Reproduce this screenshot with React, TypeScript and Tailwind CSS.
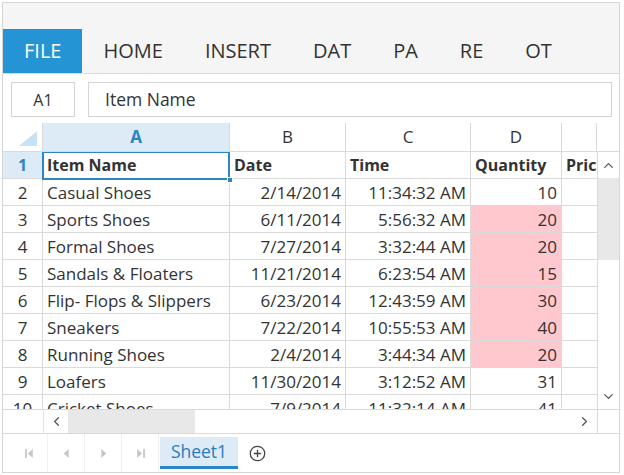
import { ChevronDown, ChevronLeft, ChevronRight, ChevronUp } from 'lucide-react';

type Row = {
  name: string;
  date: string;
  time: string;
  qty: string;
  hot?: boolean;
};

const ROWS: Row[] = [
  { name: 'Casual Shoes', date: '2/14/2014', time: '11:34:32 AM', qty: '10' },
  { name: 'Sports Shoes', date: '6/11/2014', time: '5:56:32 AM', qty: '20', hot: true },
  { name: 'Formal Shoes', date: '7/27/2014', time: '3:32:44 AM', qty: '20', hot: true },
  { name: 'Sandals & Floaters', date: '11/21/2014', time: '6:23:54 AM', qty: '15', hot: true },
  { name: 'Flip- Flops & Slippers', date: '6/23/2014', time: '12:43:59 AM', qty: '30', hot: true },
  { name: 'Sneakers', date: '7/22/2014', time: '10:55:53 AM', qty: '40', hot: true },
  { name: 'Running Shoes', date: '2/4/2014', time: '3:44:34 AM', qty: '20', hot: true },
  { name: 'Loafers', date: '11/30/2014', time: '3:12:52 AM', qty: '31' },
  { name: 'Cricket Shoes', date: '7/9/2014', time: '11:32:14 AM', qty: '41' },
];

const TABS = ['FILE', 'HOME', 'INSERT', 'DAT', 'PA', 'RE', 'OT'];

const font = { fontFamily: '"Open Sans", "Noto Sans", sans-serif' };

const cell = 'h-full border-r border-[#dadada] px-[4px] overflow-hidden whitespace-nowrap';

export default function App() {
  return (
    <div className="w-[624px] h-[475px] bg-white pt-[2px] pl-[2px] text-[#333]" style={font}>
      <div className="w-[618px] h-[471px] border border-[#d6d6d6] flex flex-col">
        {/* ribbon tabs */}
        <div className="h-[71px] shrink-0 bg-[#f5f5f5] border-b border-[#dcdcdc] pt-[26px] flex items-stretch">
          {TABS.map((tab, i) => (
            <div
              key={tab}
              className={`px-[21px] flex items-center text-[20px] ${i === 0 ? 'bg-[#2594d4] text-white' : 'text-[#333]'}`}
            >
              {tab}
            </div>
          ))}
        </div>

        {/* formula bar */}
        <div className="h-[49px] shrink-0 pt-[8px] pl-[8px] flex gap-[13px]">
          <div className="w-[64px] h-[35px] border border-[#d4d4d4] flex items-center justify-center text-[16px]">A1</div>
          <div className="w-[524px] h-[35px] border border-[#d4d4d4] flex items-center pl-[16px] text-[17.5px]">Item Name</div>
        </div>

        {/* column headers */}
        <div className="h-[29px] shrink-0 flex border-b border-[#dadada] text-[17px] leading-[28px]">
          <div className="w-[40px] h-full border-r border-[#dadada] flex items-end justify-end pr-[5px] pb-[5px]">
            <svg width="18" height="15" viewBox="0 0 18 15">
              <polygon points="18,0 18,15 0,15" fill="#c9e1f2" />
            </svg>
          </div>
          <div className="w-[187px] h-full border-r border-[#dadada] bg-[#ddebf6] text-center font-bold text-[#2a86c4]">A</div>
          <div className="w-[116px] h-full border-r border-[#dadada] text-center">B</div>
          <div className="w-[125px] h-full border-r border-[#dadada] text-center">C</div>
          <div className="w-[91px] h-full border-r border-[#dadada] text-center">D</div>
          <div className="w-[35px] h-full border-r border-[#dadada]" />
        </div>

        {/* body */}
        <div className="h-[257px] shrink-0 flex">
          <div className="w-[594px] h-full overflow-hidden text-[17px] leading-[27px]">
            <div className="h-[27px] flex border-b border-[#dadada] font-bold text-[16px]">
              <div className="w-[40px] h-full border-r border-[#dadada] bg-[#ddebf6] text-center text-[#2a86c4]">1</div>
              <div className={`w-[187px] relative !overflow-visible ${cell}`}>
                Item Name
                <div className="absolute left-[-1px] top-[-1px] right-[-1px] bottom-[-2px] border-2 border-[#2a86c4]" />
                <div className="absolute right-[-4px] bottom-[-5px] w-[6px] h-[6px] bg-[#2a86c4] border border-white" />
              </div>
              <div className={`w-[116px] ${cell}`}>Date</div>
              <div className={`w-[125px] ${cell}`}>Time</div>
              <div className={`w-[91px] ${cell}`}>Quantity</div>
              <div className="w-[35px] h-full px-[4px] overflow-hidden whitespace-nowrap">Price</div>
            </div>
            {ROWS.map((row, i) => (
              <div key={row.name} className="h-[27px] flex border-b border-[#dadada]">
                <div className="w-[40px] h-full border-r border-[#dadada] text-center">{i + 2}</div>
                <div className={`w-[187px] ${cell}`}>{row.name}</div>
                <div className={`w-[116px] text-right ${cell}`}>{row.date}</div>
                <div className={`w-[125px] text-right ${cell}`}>{row.time}</div>
                <div className={`w-[91px] text-right ${cell} ${row.hot ? 'bg-[#ffc7ce]' : ''}`}>{row.qty}</div>
                <div className="w-[35px] h-full" />
              </div>
            ))}
          </div>
          <div className="w-[22px] h-full border-l border-[#dadada] flex flex-col">
            <div className="h-[26px] flex items-center justify-center text-[#555]">
              <ChevronUp size={15} strokeWidth={2} />
            </div>
            <div className="h-[82px] bg-[#e8e8e8]" />
            <div className="flex-1" />
            <div className="h-[26px] flex items-center justify-center text-[#555]">
              <ChevronDown size={15} strokeWidth={2} />
            </div>
          </div>
        </div>

        {/* horizontal scrollbar */}
        <div className="h-[25px] shrink-0 flex border-t border-b border-[#dadada]">
          <div className="w-[41px] h-full border-r border-[#e2e2e2]" />
          <div className="w-[24px] h-full flex items-center justify-center text-[#555]">
            <ChevronLeft size={15} strokeWidth={2} />
          </div>
          <div className="w-[127px] h-full bg-[#e8e8e8]" />
          <div className="flex-1" />
          <div className="w-[26px] h-full flex items-center justify-center text-[#555] border-r border-[#dadada]">
            <ChevronRight size={15} strokeWidth={2} />
          </div>
          <div className="w-[21px] h-full" />
        </div>

        {/* sheet tabs */}
        <div className="flex-1 flex items-stretch pl-[8px]">
          {['first', 'prev', 'next', 'last'].map((nav) => (
            <div key={nav} className="w-[37px] flex items-center justify-center border-r border-[#f0f0f0]">
              <svg width="11" height="11" viewBox="0 0 10 10" fill="#c6c6c6">
                {nav === 'first' && (
                  <>
                    <rect x="1" y="1" width="1.6" height="8" />
                    <polygon points="8,1 8,9 3.5,5" />
                  </>
                )}
                {nav === 'prev' && <polygon points="7,1 7,9 2.5,5" />}
                {nav === 'next' && <polygon points="3,1 3,9 7.5,5" />}
                {nav === 'last' && (
                  <>
                    <polygon points="2,1 2,9 6.5,5" />
                    <rect x="7.4" y="1" width="1.6" height="8" />
                  </>
                )}
              </svg>
            </div>
          ))}
          <div className="ml-[1px] my-[3px] w-[78px] bg-[#ddebf6] border-b-[3px] border-[#2a86c4] flex items-center justify-center text-[17.5px] text-[#2a7cbf]">
            Sheet1
          </div>
          <div className="w-[38px] flex items-center justify-center">
            <svg width="17" height="17" viewBox="0 0 17 17" fill="none" stroke="#444" strokeWidth="1.3">
              <circle cx="8.5" cy="8.5" r="7.2" />
              <path d="M8.5 4.8v7.4M4.8 8.5h7.4" />
            </svg>
          </div>
        </div>
      </div>
    </div>
  );
}
